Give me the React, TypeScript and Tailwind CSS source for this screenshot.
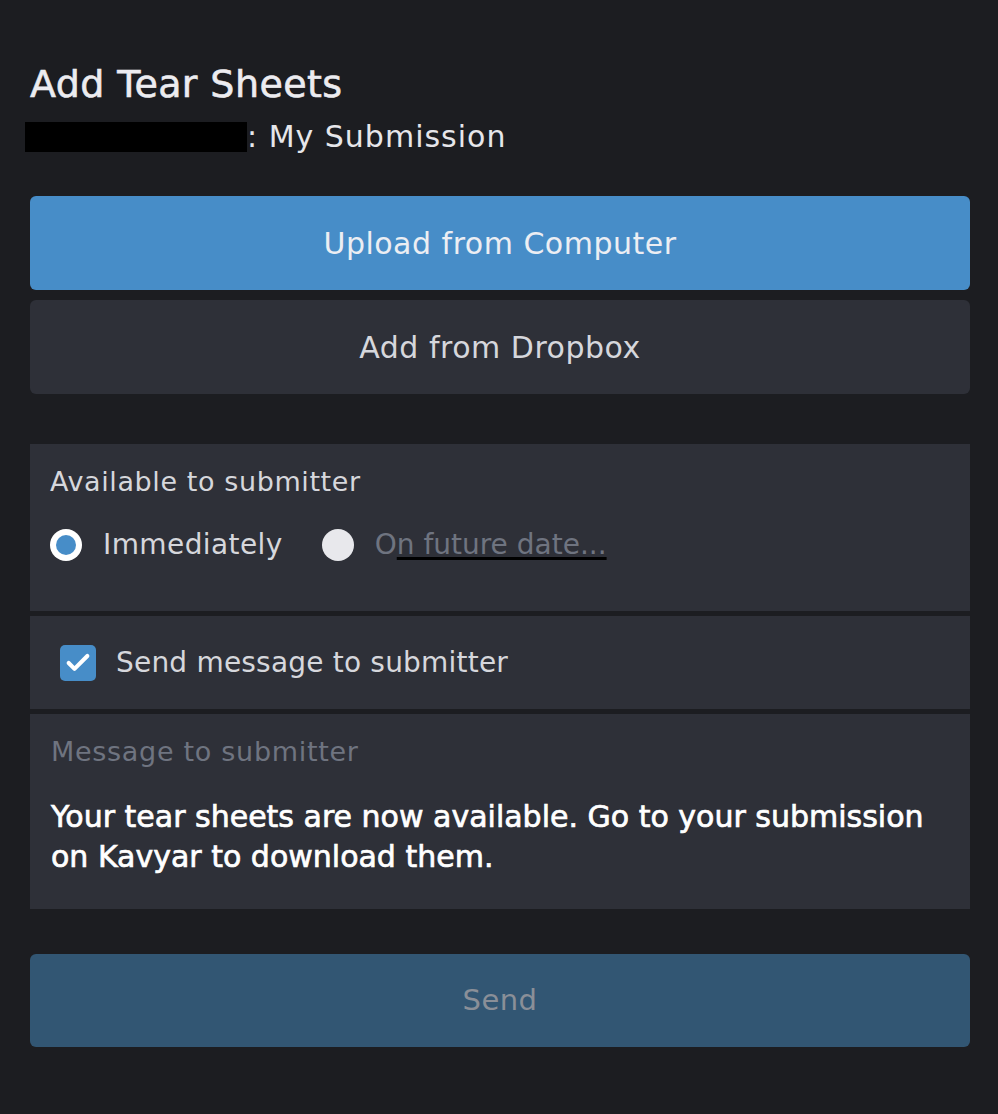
import { Check } from 'lucide-react';

const FONT = { fontFamily: '"DejaVu Sans", "Noto Sans", sans-serif' };

export default function App() {
  return (
    <div className="min-h-[1114px] bg-[#1c1d21] pl-[30px] pr-[28px] pt-[62px]" style={FONT}>
      <h1 className="text-[38px] font-normal leading-[44px] tracking-[0.4px] text-[#ececf0] [-webkit-text-stroke:0.6px_#ececf0]">
        Add Tear Sheets
      </h1>
      <div className="mt-[13px] flex items-center text-[30px] leading-[36px] tracking-[1px] text-[#e6e6ea]">
        <span className="-ml-[5px] inline-block h-[30px] w-[222px] bg-black" />
        <span>: My Submission</span>
      </div>

      <div className="mt-[41px] flex flex-col gap-[10px]">
        <button
          type="button"
          className="h-[94px] rounded-[6px] bg-[#478dc8] text-[30px] tracking-[0.5px] text-[#eceef3]"
        >
          Upload from Computer
        </button>
        <button
          type="button"
          className="h-[94px] rounded-[6px] bg-[#2e3038] text-[30px] tracking-[0.5px] text-[#d6d7dc]"
        >
          Add from Dropbox
        </button>
      </div>

      <div className="mt-[50px] flex flex-col gap-[5px]">
        <div className="h-[167px] bg-[#2e3038] px-[20px] pt-[21px]">
          <div className="text-[27px] leading-[34px] tracking-[0.6px] text-[#d6d7dc]">Available to submitter</div>
          <div className="mt-[29px] flex h-[34px] items-center">
            <span className="flex h-[32px] w-[32px] items-center justify-center rounded-full bg-white">
              <span className="h-[20px] w-[20px] rounded-full bg-[#478dc8]" />
            </span>
            <span className="ml-[21px] text-[28px] leading-[34px] tracking-[0.4px] text-[#d6d7dc]">Immediately</span>
            <span className="ml-[39px] h-[32px] w-[32px] rounded-full bg-[#e8e8ec]" />
            <span className="ml-[21px] text-[28px] leading-[34px] text-[#6f7480]">
              O
              <span className="underline decoration-black decoration-[3px] underline-offset-[3px]">
                n future date...
              </span>
            </span>
          </div>
        </div>

        <div className="flex h-[93px] items-center bg-[#2e3038] px-[30px]">
          <span className="flex h-[36px] w-[36px] items-center justify-center rounded-[5px] bg-[#478dc8]">
            <Check size={28} strokeWidth={3.5} className="text-white" />
          </span>
          <span className="ml-[20px] text-[28px] leading-[34px] tracking-[0.2px] text-[#d6d7dc]">
            Send message to submitter
          </span>
        </div>

        <div className="h-[195px] bg-[#2e3038] px-[21px] pt-[21px]">
          <div className="text-[27px] leading-[34px] tracking-[0.7px] text-[#6f7480]">Message to submitter</div>
          <p className="mt-[28px] text-[30px] leading-[40px] text-white [-webkit-text-stroke:0.7px_#ffffff]">
            Your tear sheets are now available. Go to your submission on Kavyar to download them.
          </p>
        </div>
      </div>

      <button
        type="button"
        className="mt-[45px] h-[93px] w-full rounded-[6px] bg-[#325673] text-[29px] tracking-[0.5px] text-[#8a8f98]"
      >
        Send
      </button>
    </div>
  );
}
